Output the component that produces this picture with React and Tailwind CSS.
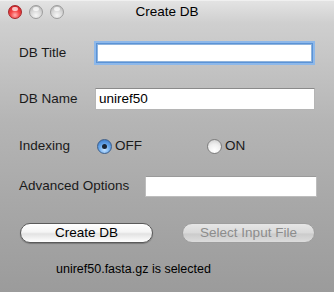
import React from "react"

const font = { fontFamily: '"Liberation Sans", Arial, sans-serif' }

const Light = ({ color }) => {
    const fills = {
        red: "bg-[radial-gradient(circle_at_50%_75%,#ffb0b0_0%,#f54848_40%,#c4161d_100%)] border-[#a3262a]",
        gray: "bg-[radial-gradient(circle_at_50%_78%,#f6f6f6_0%,#d6d6d6_50%,#acacac_100%)] border-[#9d9d9d]",
    }
    return (
        <div className={`relative w-[14px] h-[14px] rounded-full border ${fills[color]}`}>
            <div className="absolute left-[3px] top-[1px] w-[6px] h-[4px] rounded-full bg-white/70" />
        </div>
    )
}

const Radio = ({ checked }) =>
    checked ? (
        <div className="relative w-[15px] h-[15px] rounded-full border border-[#3d5f8a] bg-[radial-gradient(circle_at_50%_75%,#c8e4ff_0%,#6aa9ec_45%,#2f6cc0_100%)] flex items-center justify-center">
            <div className="w-[5px] h-[5px] rounded-full bg-[#1a2433]" />
        </div>
    ) : (
        <div className="w-[15px] h-[15px] rounded-full border border-[#7d7d7d] bg-[radial-gradient(circle_at_50%_80%,#ffffff_0%,#efefef_50%,#c9c9c9_100%)]" />
    )

export default function App() {
    return (
        <div
            style={font}
            className="w-[334px] h-[292px] flex flex-col text-[13.5px] text-[#1a1a1a] bg-[linear-gradient(to_bottom,#e3e3e3_0px,#cfcfcf_22px,#b5b5b5_120px,#a8a8a8_200px,#9b9b9b_292px)] border-t border-[#f0f0f0] overflow-hidden"
        >
            {/* title bar */}
            <div className="h-[21px] grid grid-cols-[1fr_auto_1fr] items-center">
                <div className="flex items-center gap-[7px] pl-[8px] pt-[1px]">
                    <Light color="red" />
                    <Light color="gray" />
                    <Light color="gray" />
                </div>
                <div className="leading-none pt-[1px] text-black">Create DB</div>
                <div />
            </div>

            {/* form */}
            <div className="flex flex-col pl-[19px]">
                <div className="flex items-center mt-[22px] h-[18px]">
                    <span className="w-[78px]">DB Title</span>
                    <div className="w-[215px] h-[18px] bg-white border border-[#8fb3dc] shadow-[0_0_0_1px_#5b93d6,0_0_0_3px_#8db8ea]" />
                </div>

                <div className="flex items-center mt-[26px] h-[22px]">
                    <span className="w-[76px]">DB Name</span>
                    <div className="w-[220px] h-[22px] bg-white border border-[#b5b5b5] border-t-[#8a8a8a] flex items-center pl-[3px] text-black">
                        uniref50
                    </div>
                </div>

                <div className="flex items-center mt-[28px] h-[16px]">
                    <span className="w-[78px]">Indexing</span>
                    <div className="flex items-center gap-[3px] w-[110px]">
                        <Radio checked />
                        <span>OFF</span>
                    </div>
                    <div className="flex items-center gap-[3px]">
                        <Radio />
                        <span>ON</span>
                    </div>
                </div>

                <div className="flex items-center mt-[22px] h-[21px]">
                    <span className="w-[126px]">Advanced Options</span>
                    <div className="w-[172px] h-[21px] bg-white border border-[#bdbdbd] border-t-[#9a9a9a]" />
                </div>

                <div className="flex items-center mt-[26px] h-[20px]">
                    <button className="w-[133px] h-[20px] ml-[1px] rounded-full border border-[#5a5a5a] bg-[linear-gradient(to_bottom,#ffffff_0%,#f4f4f4_45%,#e2e2e2_55%,#ffffff_100%)] shadow-[0_1px_1px_rgba(0,0,0,0.25)] text-black leading-none">
                        Create DB
                    </button>
                    <button className="w-[133px] h-[20px] ml-[29px] rounded-full border border-[#9e9e9e] bg-[linear-gradient(to_bottom,#e6e6e6_0%,#d9d9d9_50%,#cbcbcb_55%,#dcdcdc_100%)] text-[#8c8c8c] leading-none">
                        Select Input File
                    </button>
                </div>

                <div className="mt-[20px] pl-[37px] text-[12.5px] text-black leading-none">
                    uniref50.fasta.gz is selected
                </div>
            </div>
        </div>
    )
}
